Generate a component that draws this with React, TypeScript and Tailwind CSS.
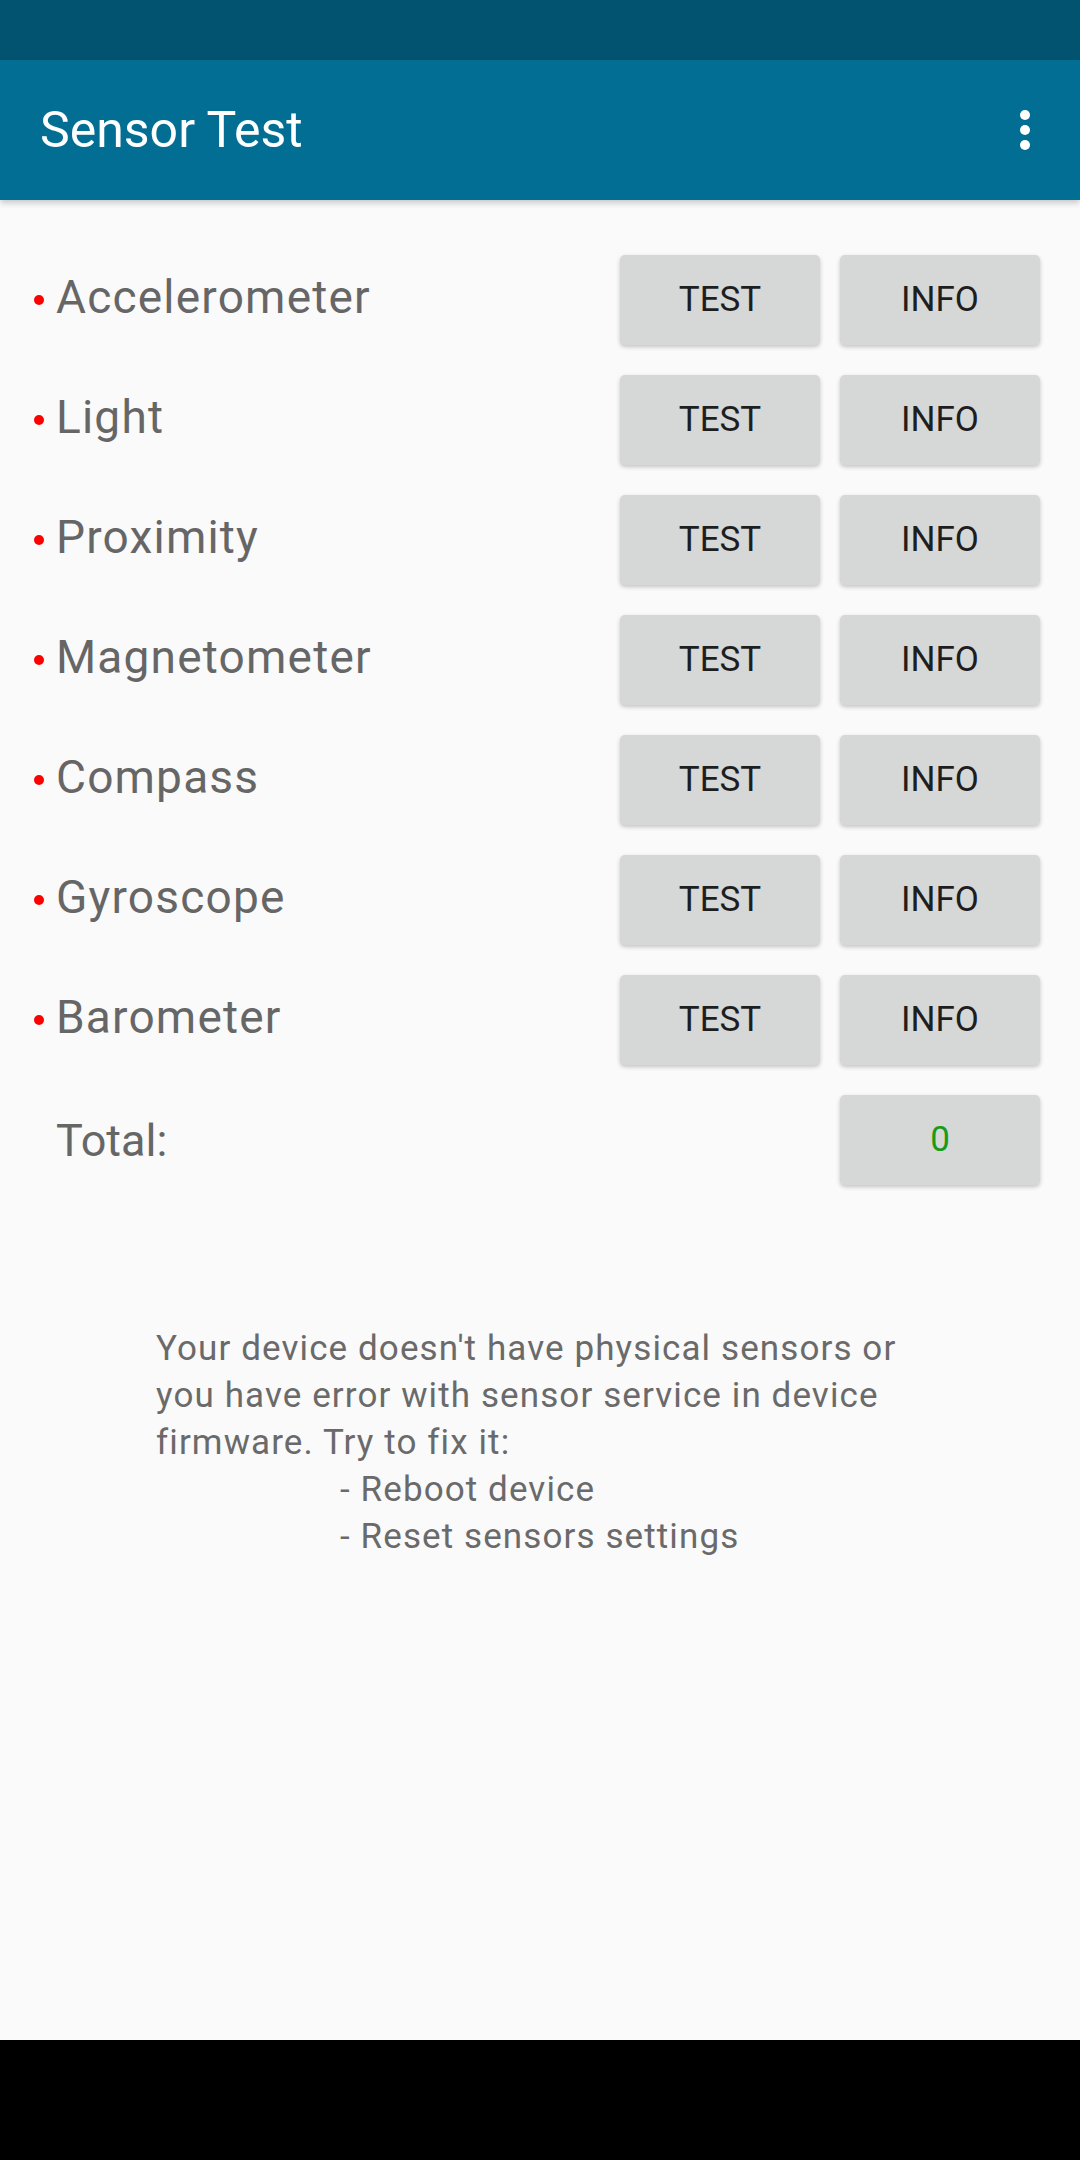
import React from "react";

const sensors = [
  "Accelerometer",
  "Light",
  "Proximity",
  "Magnetometer",
  "Compass",
  "Gyroscope",
  "Barometer",
];

function Btn({ children, green }: { children: React.ReactNode; green?: boolean }) {
  return (
    <div
      className={
        "w-[200px] h-[90px] rounded-[5px] bg-[#d6d7d7] shadow-[0_2px_4px_rgba(0,0,0,0.22)] flex items-center justify-center text-[35px] " +
        (green ? "text-[#179c17]" : "text-[#1e1e1e]")
      }
    >
      {children}
    </div>
  );
}

export default function App() {
  return (
    <div
      className="w-[1080px] h-[2160px] flex flex-col bg-[#fafafa] overflow-hidden"
      style={{ fontFamily: "Roboto, 'Noto Sans', sans-serif" }}
    >
      <div className="h-[60px] bg-[#01536f] shrink-0" />
      <div className="h-[140px] bg-[#026e94] shrink-0 flex items-center justify-between pl-[40px] pr-[25px] shadow-[0_3px_6px_rgba(0,0,0,0.2)] relative z-10">
        <span className="text-white text-[50px] leading-none">Sensor Test</span>
        <svg width="60" height="60" viewBox="0 0 24 24" fill="white">
          <circle cx="12" cy="6" r="2" />
          <circle cx="12" cy="12" r="2" />
          <circle cx="12" cy="18" r="2" />
        </svg>
      </div>
      <div className="flex-1 flex flex-col">
        <div className="flex flex-col gap-[30px] pt-[55px]">
          {sensors.map((s) => (
            <div key={s} className="flex items-center h-[90px] pr-[40px]">
              <div className="flex-1 flex items-center">
                <span className="w-[10px] h-[10px] rounded-full bg-[#ff0000] ml-[34px] mr-[12px] shrink-0" />
                <span className="text-[46px] tracking-[1.2px] text-[#666666] leading-none -mt-[6px]">{s}</span>
              </div>
              <div className="flex gap-[20px]">
                <Btn>TEST</Btn>
                <Btn>INFO</Btn>
              </div>
            </div>
          ))}
          <div className="flex items-center h-[90px] pr-[40px]">
            <div className="flex-1 pl-[56px]">
              <span className="text-[45px] text-[#666666] leading-none">Total:</span>
            </div>
            <Btn green>0</Btn>
          </div>
        </div>
        <div className="mt-[140px] pl-[156px] text-[35px] tracking-[1.1px] leading-[47px] text-[#6a6a6a]">
          <div>Your device doesn't have physical sensors or</div>
          <div>you have error with sensor service in device</div>
          <div>firmware. Try to fix it:</div>
          <div className="pl-[184px]">- Reboot device</div>
          <div className="pl-[184px]">- Reset sensors settings</div>
        </div>
      </div>
      <div className="h-[120px] bg-black shrink-0" />
    </div>
  );
}
